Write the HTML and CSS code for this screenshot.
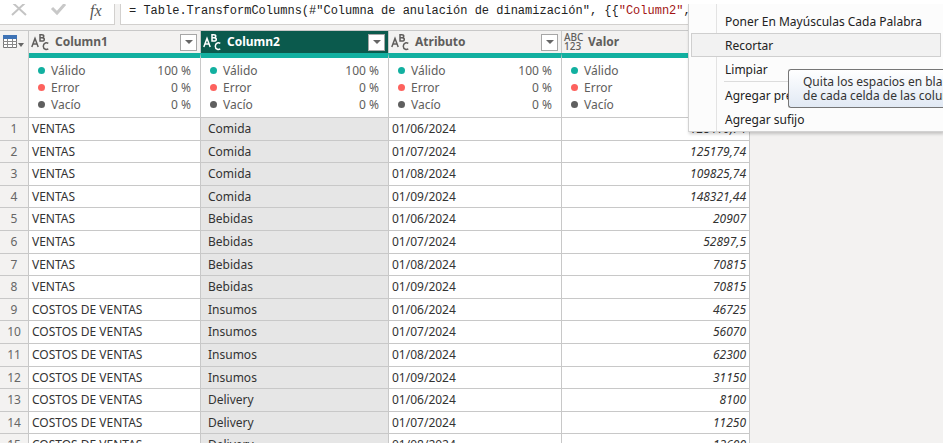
FILE: index.html
```html
<!DOCTYPE html>
<html lang="es">
<head>
<meta charset="utf-8">
<title>Editor de Power Query</title>
<link rel="stylesheet" href="styles.css">
</head>
<body>
<main class="editor">
  <div class="formula-bar">
    <div class="formula-actions">
      <button class="icon-button" type="button" aria-label="Cancelar"><svg width="18" height="16" viewBox="0 0 18 16"><path d="M3 -1l13 12M15 -1L2 11" fill="none" stroke="#c4c4c4" stroke-width="2"/></svg></button>
      <button class="icon-button" type="button" aria-label="Aceptar"><svg width="18" height="16" viewBox="0 0 18 16"><path d="M2 4l5 5L15 0" fill="none" stroke="#c8c8c8" stroke-width="3"/></svg></button>
      <button class="icon-button fx" type="button">fx</button>
    </div>
    <code class="formula">= Table.TransformColumns(#"Columna de anulación de dinamización", {{<span class="string">"Column2"</span>,</code>
  </div>

  <div class="grid">
    <table>
      <colgroup><col class="col-index"><col class="col-a"><col class="col-b"><col class="col-c"><col class="col-b"></colgroup>
      <thead>
        <tr class="names">
          <th class="index"><button class="corner" type="button" aria-label="Menú de tabla"><svg width="22" height="14" viewBox="0 0 22 14"><path d="M.5.5h13v12H.5z" fill="#fff" stroke="#777"/><path d="M0 0h14v4H0z" fill="#3f73b5"/><path d="M0 6.500h14M0 9.500h14M4.500 4v9M9.500 4v9" stroke="#8a8a8a" fill="none"/><path d="M15 8h6l-3 4z" fill="#666"/></svg></button></th>
          <th><div class="head"><svg class="type" width="18" height="18" viewBox="0 0 18 18"><use href="#abc"/></svg><span>Column1</span><button class="filter" type="button" aria-label="Filtrar Column1"></button></div></th>
          <th class="selected"><div class="head"><svg class="type" width="18" height="18" viewBox="0 0 18 18"><use href="#abc"/></svg><span>Column2</span><button class="filter" type="button" aria-label="Filtrar Column2"></button></div></th>
          <th><div class="head"><svg class="type" width="18" height="18" viewBox="0 0 18 18"><use href="#abc"/></svg><span>Atributo</span><button class="filter" type="button" aria-label="Filtrar Atributo"></button></div></th>
          <th><div class="head"><span class="any-type">ABC<br>123</span><span>Valor</span><button class="filter" type="button" aria-label="Filtrar Valor"></button></div></th>
        </tr>
        <tr class="quality">
          <td class="index"></td>
          <td><ul><li class="valid">Válido <b>100 %</b></li><li class="error">Error <b>0 %</b></li><li class="empty">Vacío <b>0 %</b></li></ul></td>
          <td><ul><li class="valid">Válido <b>100 %</b></li><li class="error">Error <b>0 %</b></li><li class="empty">Vacío <b>0 %</b></li></ul></td>
          <td><ul><li class="valid">Válido <b>100 %</b></li><li class="error">Error <b>0 %</b></li><li class="empty">Vacío <b>0 %</b></li></ul></td>
          <td><ul><li class="valid">Válido</li><li class="error">Error</li><li class="empty">Vacío</li></ul></td>
        </tr>
      </thead>
      <tbody>
        <tr><th>1</th><td>VENTAS</td><td>Comida</td><td>01/06/2024</td><td>128410,74</td></tr>
        <tr><th>2</th><td>VENTAS</td><td>Comida</td><td>01/07/2024</td><td>125179,74</td></tr>
        <tr><th>3</th><td>VENTAS</td><td>Comida</td><td>01/08/2024</td><td>109825,74</td></tr>
        <tr><th>4</th><td>VENTAS</td><td>Comida</td><td>01/09/2024</td><td>148321,44</td></tr>
        <tr><th>5</th><td>VENTAS</td><td>Bebidas</td><td>01/06/2024</td><td>20907</td></tr>
        <tr><th>6</th><td>VENTAS</td><td>Bebidas</td><td>01/07/2024</td><td>52897,5</td></tr>
        <tr><th>7</th><td>VENTAS</td><td>Bebidas</td><td>01/08/2024</td><td>70815</td></tr>
        <tr><th>8</th><td>VENTAS</td><td>Bebidas</td><td>01/09/2024</td><td>70815</td></tr>
        <tr><th>9</th><td>COSTOS DE VENTAS</td><td>Insumos</td><td>01/06/2024</td><td>46725</td></tr>
        <tr><th>10</th><td>COSTOS DE VENTAS</td><td>Insumos</td><td>01/07/2024</td><td>56070</td></tr>
        <tr><th>11</th><td>COSTOS DE VENTAS</td><td>Insumos</td><td>01/08/2024</td><td>62300</td></tr>
        <tr><th>12</th><td>COSTOS DE VENTAS</td><td>Insumos</td><td>01/09/2024</td><td>31150</td></tr>
        <tr><th>13</th><td>COSTOS DE VENTAS</td><td>Delivery</td><td>01/06/2024</td><td>8100</td></tr>
        <tr><th>14</th><td>COSTOS DE VENTAS</td><td>Delivery</td><td>01/07/2024</td><td>11250</td></tr>
        <tr><th>15</th><td>COSTOS DE VENTAS</td><td>Delivery</td><td>01/08/2024</td><td>12600</td></tr>
      </tbody>
    </table>
  </div>

  <div class="menu" role="menu">
    <button type="button" role="menuitem">Poner En Mayúsculas Cada Palabra</button>
    <button type="button" role="menuitem" class="hover">Recortar</button>
    <button type="button" role="menuitem">Limpiar</button>
    <hr>
    <button type="button" role="menuitem">Agregar prefijo</button>
    <button type="button" role="menuitem">Agregar sufijo</button>
  </div>
  <div class="tooltip" role="tooltip">Quita los espacios en blanco<br>de cada celda de las columnas</div>
</main>

<svg class="symbols" aria-hidden="true">
  <symbol id="abc" viewBox="0 0 18 18">
    <g fill="none" stroke="currentColor" stroke-width="1.500">
      <path d="M.8 14L4 5.500 7.200 14M2 11h4"/>
      <path d="M9 1v7.500M8.300 1.700h2.500q2 0 2 1.500t-2 1.600H9M10.800 4.800q2.500 0 2.500 1.600t-2.500 1.600H8.300"/>
      <path d="M17.300 10.400q-1.500-.9-3-.4-2 .7-2 3.200 0 2.400 2 3 1.500.5 3-.4"/>
    </g>
  </symbol>
</svg>
</body>
</html>
```
FILE: styles.css
```css
* { box-sizing: border-box; }
body {
  margin: 0;
  height: 100vh;
  padding: 4px 0 3px;
  overflow: hidden;
  background: #fff;
  color: #333;
  font: 12px/16px "Noto Sans", "Open Sans", sans-serif;
}
button { font: inherit; color: inherit; border: 0; padding: 0; background: none; }
.symbols { display: none; }
.editor {
  position: relative;
  display: flex;
  flex-direction: column;
  height: 100%;
  overflow: hidden;
  background: #f3f2f1;
}

.formula-bar { display: flex; gap: 5px; padding-bottom: 5px; border-bottom: 1px solid #c8c8c8; }
.formula-actions {
  display: flex;
  gap: 22px;
  width: 115px;
  height: 21px;
  padding-left: 10px;
  background: #fff;
  border: solid #d2d0ce;
  border-width: 0 1px 1px 0;
}
.icon-button { display: flex; align-items: flex-start; width: 18px; }
.fx { font: italic 16px/13px "Liberation Serif", serif; color: #555; }
.formula {
  flex: 1;
  height: 21px;
  padding-left: 8px;
  overflow: hidden;
  white-space: pre;
  background: #fff;
  border: solid #d2d0ce;
  border-width: 0 0 1px 1px;
  color: #222;
  font: 12px/14px "Liberation Mono", monospace;
}
.string { color: #a31515; }

.grid { flex: 1; min-height: 0; overflow: hidden; }
table { table-layout: fixed; width: 750px; border-spacing: 0; background: #fff; }
.col-index { width: 29px; }
.col-a { width: 172px; }
.col-b { width: 188px; }
.col-c { width: 173px; }
th, td { padding: 0; border: solid #c8c8c8; border-width: 0 1px 1px 0; }
.names th { height: 22px; background: #f3f2f1; border-bottom: 0; color: #605e5c; }
.names .selected { background: #0b5a4d; color: #fff; }
.corner { display: flex; padding: 0 0 0 3px; }
.head { display: flex; align-items: center; gap: 6px; padding: 0 3px 0 2px; }
.head span { flex: 1; text-align: left; font-weight: 700; }
.head .any-type { flex: none; width: 18px; font: 500 10px/9px "Noto Sans", sans-serif; }
.filter {
  display: flex;
  align-items: center;
  justify-content: center;
  width: 17px;
  height: 17px;
  background: #fff;
  border: 1px solid #a6a6a6;
}
.filter::after { content: ""; border: solid transparent; border-width: 4px 4px 0; border-top-color: #666; }

.quality td { height: 65px; border-top: 5px solid #12b0a0; vertical-align: top; color: #605e5c; }
.quality td.index { border-top: 0; }
ul { margin: 0; padding: 4px 9px 0; list-style: none; }
li { display: flex; align-items: center; height: 17px; }
li::before { content: ""; width: 7px; height: 7px; margin-right: 6px; border-radius: 50%; background: currentColor; }
li b { margin-left: auto; font-weight: 400; }
.valid::before { background: #12b0a0; }
.error::before { background: #fd625e; }
.empty::before { background: #5f5f5f; }

.index, tbody th { background: #f3f2f1; }
tbody th { font-weight: 400; color: #666; text-align: center; }
tbody tr { height: 23px; }
tbody tr:nth-child(5n + 2), tbody tr:nth-child(5n + 4) { height: 22px; }
tbody td { padding-left: 3px; white-space: nowrap; }
tbody td:nth-child(3) { padding-left: 7px; background: #e6e6e6; }
tbody td:last-child { padding-right: 3px; text-align: right; font-style: italic; }

.menu {
  position: absolute;
  top: 0;
  right: 0;
  display: flex;
  flex-direction: column;
  width: 255px;
  padding: 5px 2px 0;
  background: linear-gradient(90deg, transparent 27px, #e3e3e3 27px 28px, transparent 28px) #fcfcfc;
  border: solid #d2d2d2;
  border-width: 0 0 1px 1px;
  box-shadow: 1px 2px 3px #0003;
  color: #222;
}
.menu button { height: 24px; padding: 1px 0 0 33px; text-align: left; border: 1px solid transparent; }
.menu .hover { background: #f2f2f2; border-color: #cfcfcf; }
.menu hr { width: 217px; margin: 0 0 1px auto; border: 0; border-top: 1px solid #dcdcdc; }
.tooltip {
  position: absolute;
  top: 65px;
  right: 0;
  width: 155px;
  padding: 5px 0 4px 14px;
  overflow: hidden;
  white-space: nowrap;
  background: linear-gradient(#fff, #e1e9f4);
  border: 1px solid #767676;
  border-right: 0;
  border-radius: 3px 0 0 3px;
  color: #333;
  line-height: 14px;
}
```
